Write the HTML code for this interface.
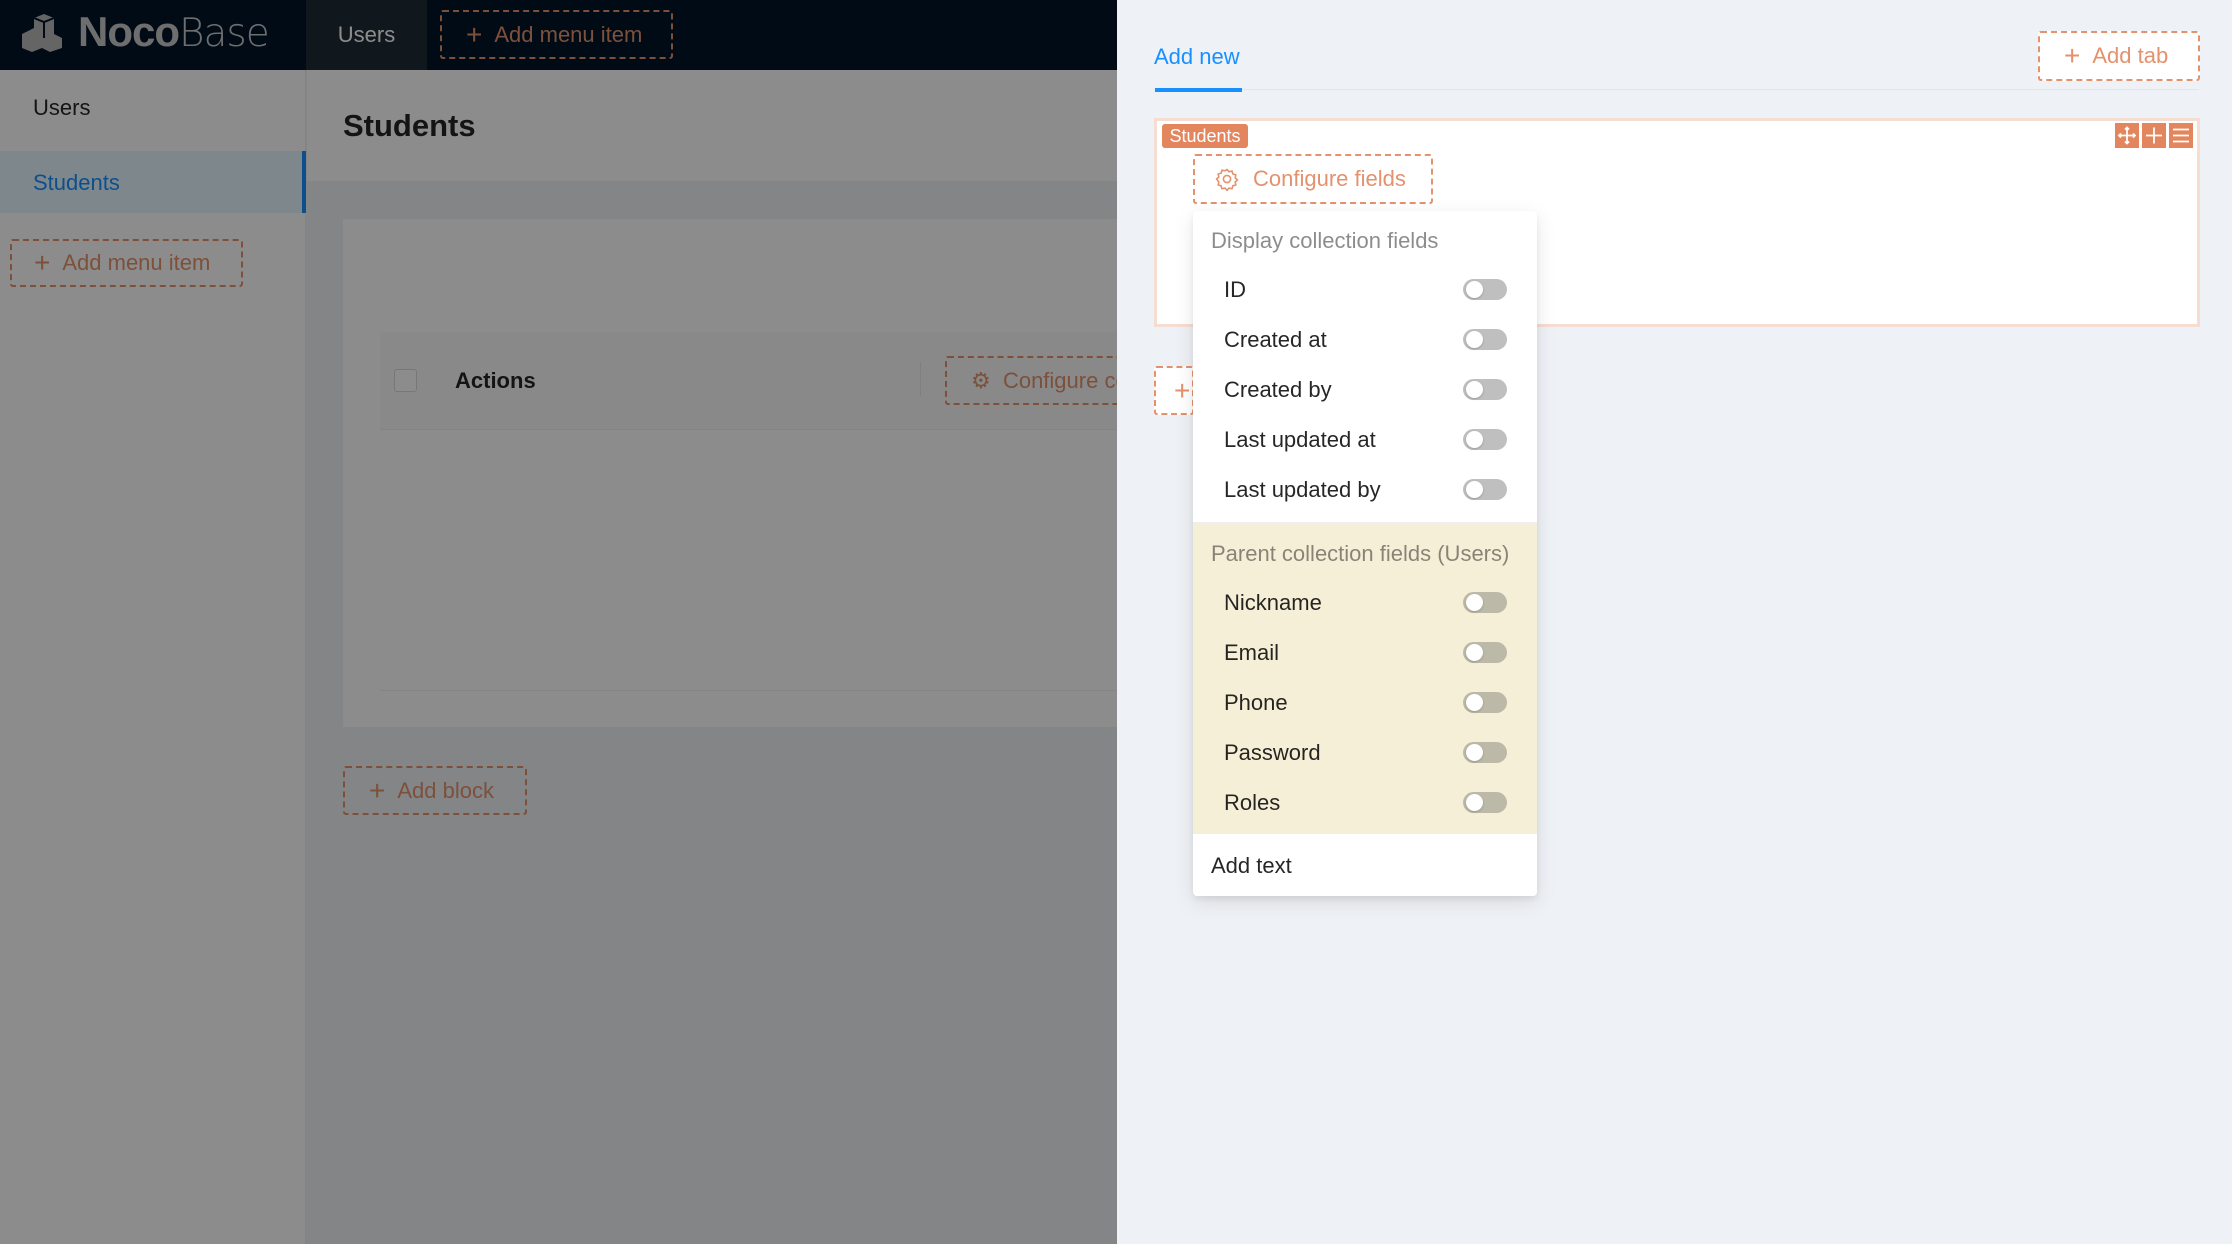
<!DOCTYPE html>
<html><head><meta charset="utf-8"><style>
*{box-sizing:border-box;margin:0;padding:0}
body{width:2232px;height:1244px;overflow:hidden;position:relative;font-family:"Liberation Sans",sans-serif;background:#f0f2f5;color:rgba(0,0,0,.85)}
.abs{position:absolute}
.dash{position:absolute;border:2px dashed #e3926d;color:#e3926d;border-radius:3px;display:flex;align-items:center;font-size:22px;white-space:nowrap;overflow:hidden}
.row{position:absolute;left:0;width:344px;height:50px;font-size:22px;display:flex;align-items:center;padding-left:31px}
.sw{position:absolute;left:270px;top:14px;width:44px;height:21px;border-radius:11px;background:#bfbfbf}
.sw:after{content:"";position:absolute;left:3px;top:2px;width:17px;height:17px;border-radius:50%;background:#fff;box-shadow:0 1px 2px rgba(0,0,0,.2)}
.cream .sw{background:#bcb9a8}
</style></head><body>
<div class="abs" style="left:0;top:0;width:1117px;height:70px;background:#001529"></div>
<svg class="abs" style="left:20px;top:14px" width="46" height="40" viewBox="0 0 46 40"><path d="M2 20 L14 14 L14 4 L24 0 L34 4 L34 20 L42 24 L42 34 L30 38 L22 34 L12 38 L2 34 Z" fill="#b8b8b8"/><path d="M14 4 L24 8 L34 4 M24 8 L24 24" stroke="#001529" stroke-width="2" fill="none"/></svg>
<div class="abs" style="left:78px;top:8px;font-size:42px;color:#c8c8c8;letter-spacing:-1px"><b>Noco</b><span style="font-family:'DejaVu Sans',sans-serif;font-size:39px;font-weight:200">Base</span></div>
<div class="abs" style="left:306px;top:0;width:121px;height:70px;background:#1e2a36;color:#fff;font-size:22px;line-height:70px;text-align:center">Users</div>
<div class="dash" style="left:440px;top:10px;width:233px;height:49px;padding-left:24px"><span style="font-size:28px;margin-right:12px">+</span>Add menu item</div>
<div class="abs" style="left:0;top:70px;width:306px;height:1174px;background:#fff;border-right:1px solid #eee"></div>
<div class="abs" style="left:33px;top:95px;font-size:22px">Users</div>
<div class="abs" style="left:0;top:151px;width:306px;height:62px;background:#e6f7ff;border-right:4px solid #1890ff"></div>
<div class="abs" style="left:33px;top:170px;font-size:22px;color:#1890ff">Students</div>
<div class="dash" style="left:10px;top:239px;width:233px;height:48px;padding-left:22px"><span style="font-size:28px;margin-right:12px">+</span>Add menu item</div>
<div class="abs" style="left:307px;top:70px;width:810px;height:111px;background:#fff"></div>
<div class="abs" style="left:343px;top:108px;font-size:31px;font-weight:bold">Students</div>
<div class="abs" style="left:343px;top:219px;width:774px;height:508px;background:#fff"></div>
<div class="abs" style="left:380px;top:332px;width:737px;height:98px;background:#fafafa;border-bottom:1px solid #f0f0f0"></div>
<div class="abs" style="left:394px;top:369px;width:23px;height:23px;border:1px solid #d9d9d9;border-radius:3px;background:#fff"></div>
<div class="abs" style="left:455px;top:368px;font-size:22px;font-weight:bold">Actions</div>
<div class="abs" style="left:920px;top:362px;width:1px;height:34px;background:#e8e8e8"></div>
<div class="dash" style="left:945px;top:356px;width:260px;height:49px;padding-left:24px">⚙&nbsp;&nbsp;Configure columns</div>
<div class="abs" style="left:380px;top:690px;width:737px;height:1px;background:#f0f0f0"></div>
<div class="dash" style="left:343px;top:766px;width:184px;height:49px;padding-left:24px"><span style="font-size:28px;margin-right:12px">+</span>Add block</div>
<div class="abs" style="left:0;top:0;width:1117px;height:1244px;background:rgba(0,0,0,.45)"></div>
<div class="abs" style="left:1117px;top:0;width:1115px;height:1244px;background:#eef1f5"></div>
<div class="abs" style="left:1154px;top:44px;font-size:22px;color:#1890ff">Add new</div>
<div class="abs" style="left:1154px;top:89px;width:1045px;height:1px;background:#e2e6ea"></div>
<div class="abs" style="left:1155px;top:88px;width:87px;height:4px;background:#1890ff"></div>
<div class="dash" style="left:2038px;top:31px;width:162px;height:50px;padding-left:24px;background:#fff"><span style="font-size:28px;margin-right:12px">+</span>Add tab</div>
<div class="abs" style="left:1154px;top:118px;width:1046px;height:209px;background:#fff;border:3px solid #f6ddd2"></div>
<div class="abs" style="left:1162px;top:124px;width:86px;height:24px;background:#e3865e;border-radius:3px;color:#fff;font-size:18px;line-height:24px;text-align:center">Students</div>
<svg class="abs" style="left:2115px;top:123px" width="78" height="25" viewBox="0 0 78 25"><rect width="24" height="25" fill="#e3865e"/><rect x="27" width="24" height="25" fill="#e3865e"/><rect x="54" width="24" height="25" fill="#e3865e"/><path d="M4 12.5H20M12 4.5V20.5M6 10.5l-2 2 2 2M18 10.5l2 2-2 2M10 6.5l2-2 2 2M10 18.5l2 2 2-2M31 12.5H47M39 4.5V20.5M58 6.5H74M58 12.5H74M58 18.5H74" stroke="#fff" stroke-width="1.8" fill="none"/></svg>
<div class="dash" style="left:1154px;top:366px;width:40px;height:49px;padding-left:18px;background:#fff"><span style="font-size:28px">+</span></div>
<div class="abs" style="left:1193px;top:235px;width:0;height:58px;border-left:2px dashed #e3926d"></div>
<div class="dash" style="left:1193px;top:154px;width:240px;height:50px;padding-left:20px;background:#fff">
<svg width="24" height="24" viewBox="0 0 24 24" style="margin-right:14px"><path d="M12 2.5l2 2.2 3-.6.9 2.9 2.9.9-.6 3 2.2 2-2.2 2 .6 3-2.9.9-.9 2.9-3-.6-2 2.2-2-2.2-3 .6-.9-2.9-2.9-.9.6-3L1.6 12l2.2-2-.6-3 2.9-.9.9-2.9 3 .6z" fill="none" stroke="#e3926d" stroke-width="1.6"/><circle cx="12" cy="12" r="3.6" fill="none" stroke="#e3926d" stroke-width="1.6"/></svg>Configure fields</div>
<div class="abs" style="left:1193px;top:211px;width:344px;height:685px;background:#fff;border-radius:4px;box-shadow:0 6px 20px rgba(0,0,0,.1),0 3px 6px rgba(0,0,0,.06)">
<div class="abs" style="left:18px;top:17px;font-size:22px;color:rgba(0,0,0,.45)">Display collection fields</div>
<div class="row" style="top:54px">ID<span class="sw"></span></div>
<div class="row" style="top:104px">Created at<span class="sw"></span></div>
<div class="row" style="top:154px">Created by<span class="sw"></span></div>
<div class="row" style="top:204px">Last updated at<span class="sw"></span></div>
<div class="row" style="top:254px">Last updated by<span class="sw"></span></div>
<div class="abs cream" style="left:0;top:311px;width:344px;height:312px;background:#f6efd7;border-top:2px solid #eceef0">
<div class="abs" style="left:18px;top:17px;font-size:22px;color:rgba(0,0,0,.45)">Parent collection fields (Users)</div>
<div class="row" style="top:54px">Nickname<span class="sw"></span></div>
<div class="row" style="top:104px">Email<span class="sw"></span></div>
<div class="row" style="top:154px">Phone<span class="sw"></span></div>
<div class="row" style="top:204px">Password<span class="sw"></span></div>
<div class="row" style="top:254px">Roles<span class="sw"></span></div>
</div>
<div class="abs" style="left:18px;top:642px;font-size:22px">Add text</div>
</div>
</body></html>
